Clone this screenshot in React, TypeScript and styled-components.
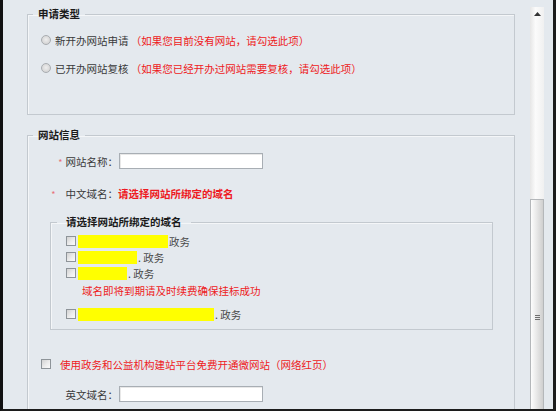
import styled, { createGlobalStyle } from "styled-components";

const GlobalStyle = createGlobalStyle`
  html, body {
    margin: 0;
    padding: 0;
    background: #e4e9ee;
  }
  body {
    font-family: "Noto Sans CJK SC", "Noto Sans", sans-serif;
    font-size: 10.5px;
    color: #3a3a3a;
  }
`;

const Frame = styled.div`
  width: 556px;
  height: 411px;
  box-sizing: border-box;
  display: flex;
  background: #e4e9ee;
  border-left: 3px solid #111;
  border-right: 3px solid #1c1c1c;
  border-bottom: 2px solid #1c1c1c;
  overflow: hidden;
`;

const Content = styled.div`
  width: 488px;
  margin-left: 24px;
  padding-top: 8px;
  flex-shrink: 0;
`;

const Group = styled.fieldset<{ $pb?: number }>`
  margin: 0;
  padding: 0 0 ${(p) => p.$pb ?? 0}px 0;
  border: 1px solid #c3c9cf;
  box-shadow: inset 1px 1px 0 #f4f6f8;
  min-width: 0;
`;

const OuterGroup = styled(Group)`
  width: 488px;
  box-sizing: border-box;
  & + & {
    margin-top: 14px;
  }
`;

const InnerGroup = styled(Group)`
  width: 443px;
  box-sizing: border-box;
  margin: 13px 0 0 22px;
`;

const Legend = styled.legend<{ $inner?: boolean }>`
  padding: 0 ${(p) => (p.$inner ? 9 : 5)}px;
  margin-left: ${(p) => (p.$inner ? 6 : 5)}px;
  line-height: 12px;
  height: 12px;
  font-weight: bold;
  color: #1a1a1a;
  font-size: 10.5px;
`;

const Row = styled.div<{ $mt: number; $ml?: number; $h?: number }>`
  display: flex;
  align-items: center;
  height: ${(p) => p.$h ?? 20}px;
  margin-top: ${(p) => p.$mt}px;
  margin-left: ${(p) => p.$ml ?? 0}px;
  white-space: nowrap;
`;

const Radio = styled.span`
  width: 10px;
  height: 10px;
  border-radius: 50%;
  box-sizing: border-box;
  border: 1px solid #a9adb1;
  background: radial-gradient(circle at 50% 45%, #eeeeee 0, #d4d4d4 75%);
  margin-right: 4px;
  flex-shrink: 0;
`;

const Check = styled.span<{ $mr?: number }>`
  width: 10px;
  height: 10px;
  box-sizing: border-box;
  border: 1px solid #8e9499;
  background: linear-gradient(135deg, #d2d2d2 0%, #ececec 55%, #fafafa 100%);
  margin-right: ${(p) => p.$mr ?? 2}px;
  flex-shrink: 0;
`;

const Hint = styled.span<{ $bold?: boolean }>`
  color: #ee1a22;
  font-weight: ${(p) => (p.$bold ? "bold" : "normal")};
`;

const Label = styled.span`
  width: 90px;
  text-align: right;
  flex-shrink: 0;
  color: #3a3a3a;
`;

const Star = styled.span<{ $gap: number }>`
  color: #e8707a;
  font-size: 9px;
  margin-right: ${(p) => p.$gap}px;
`;

const TextInput = styled.input`
  width: 144px;
  height: 16px;
  box-sizing: border-box;
  margin: 0 0 0 1px;
  padding: 0 3px;
  border: 1px solid #a8aeb4;
  background: #fff;
  box-shadow: inset 1px 1px 0 #e8e8e8;
  font: inherit;
`;

const Mask = styled.span<{ $w: number }>`
  width: ${(p) => p.$w}px;
  height: 13px;
  background: #ffff00;
  flex-shrink: 0;
`;

const Suffix = styled.span`
  color: #4a4a4a;
  margin-left: 1px;
`;

const Notice = styled.div`
  color: #ee1a22;
  line-height: 16px;
  margin: 2px 0 0 31px;
`;

const ScrollBar = styled.div`
  width: 14px;
  margin: 7px 0 0 15px;
  display: flex;
  flex-direction: column;
  background: linear-gradient(90deg, #e6e6e6, #fbfbfb 40%, #f0f0f0);
  flex-shrink: 0;
`;

const ArrowBtn = styled.div`
  height: 14px;
  display: flex;
  align-items: center;
  justify-content: center;
`;

const Thumb = styled.div`
  margin-top: 178px;
  flex: 1;
  box-sizing: border-box;
  border: 1px solid #b4b7ba;
  border-bottom: none;
  background: linear-gradient(90deg, #fdfdfd 0%, #e9e9e9 45%, #cfcfcf 100%);
  display: flex;
  justify-content: center;
  padding-top: 115px;
`;

const Grip = styled.div`
  width: 5px;
  height: 5px;
  background: repeating-linear-gradient(
    180deg,
    #6f6f6f 0,
    #6f6f6f 1px,
    transparent 1px,
    transparent 2px
  );
`;

const domains = [
  { w: 90, dot: false },
  { w: 59, dot: true },
  { w: 49, dot: true },
];

function DomainRow({ w, dot, mt }: { w: number; dot: boolean; mt: number }) {
  return (
    <Row $mt={mt} $ml={15} $h={16}>
      <Check />
      <Mask $w={w} />
      <Suffix>{dot ? ". 政务" : " 政务"}</Suffix>
    </Row>
  );
}

export default function App() {
  return (
    <>
      <GlobalStyle />
      <Frame>
        <Content>
          <OuterGroup $pb={36}>
            <Legend>申请类型</Legend>
            <Row $mt={10} $ml={13}>
              <Radio />
              新开办网站申请
              <Hint>&nbsp;（如果您目前没有网站，请勾选此项）</Hint>
            </Row>
            <Row $mt={8} $ml={13}>
              <Radio />
              已开办网站复核
              <Hint>&nbsp;（如果您已经开办过网站需要复核，请勾选此项）</Hint>
            </Row>
          </OuterGroup>

          <OuterGroup $pb={40}>
            <Legend>网站信息</Legend>
            <Row $mt={10}>
              <Label>
                <Star $gap={3}>*</Star>网站名称：
              </Label>
              <TextInput type="text" />
            </Row>
            <Row $mt={12}>
              <Label>
                <Star $gap={10}>*</Star>中文域名：
              </Label>
              <Hint $bold>请选择网站所绑定的域名</Hint>
            </Row>

            <InnerGroup $pb={7}>
              <Legend $inner>请选择网站所绑定的域名</Legend>
              {domains.map((d, i) => (
                <DomainRow key={i} w={d.w} dot={d.dot} mt={i === 0 ? 5 : 0} />
              ))}
              <Notice>域名即将到期请及时续费确保挂标成功</Notice>
              <DomainRow w={136} dot mt={7} />
            </InnerGroup>

            <Row $mt={24} $ml={13}>
              <Check $mr={9} />
              <Hint>使用政务和公益机构建站平台免费开通微网站（网络红页）</Hint>
            </Row>
            <Row $mt={10}>
              <Label>英文域名：</Label>
              <TextInput type="text" />
            </Row>
          </OuterGroup>
        </Content>

        <ScrollBar>
          <ArrowBtn>
            <svg width="7" height="4" viewBox="0 0 7 4">
              <path d="M0 4 L3.5 0 L7 4 Z" fill="#333" />
            </svg>
          </ArrowBtn>
          <Thumb>
            <Grip />
          </Thumb>
        </ScrollBar>
      </Frame>
    </>
  );
}
